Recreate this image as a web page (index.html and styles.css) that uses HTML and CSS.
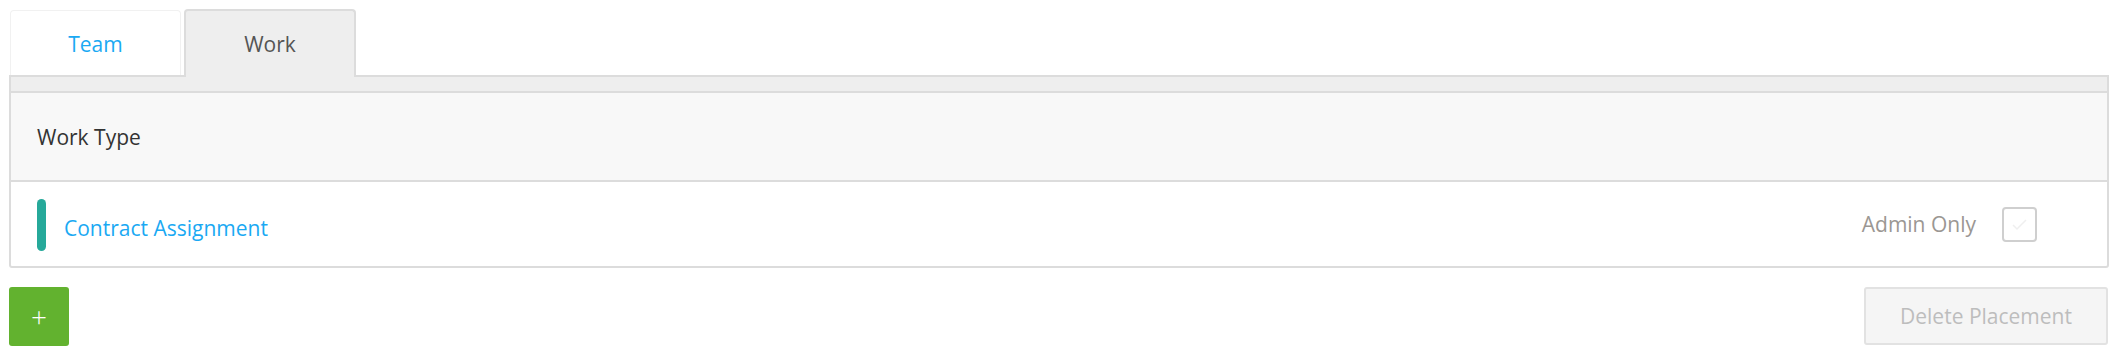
FILE: index.html
```
<!DOCTYPE html>
<html>
<head>
<meta charset="utf-8">
<link rel="stylesheet" href="styles.css">
</head>
<body>
<div class="page">
  <div class="tabs">
    <div class="tab tab-team">Team</div>
    <div class="tab tab-work">Work</div>
  </div>
  <div class="panel">
    <div class="strip"></div>
    <div class="head">Work Type</div>
    <div class="row">
      <div class="row-left">
        <span class="bar"></span>
        <span class="link">Contract Assignment</span>
      </div>
      <div class="row-right">
        <span class="admin">Admin Only</span>
        <span class="check">
          <svg width="17" height="13" viewBox="0 0 17 13"><path d="M2 7 L6 11 L15 2" fill="none" stroke="#efefef" stroke-width="1.5"/></svg>
        </span>
      </div>
    </div>
  </div>
  <div class="actions">
    <button class="add">+</button>
    <button class="delete">Delete Placement</button>
  </div>
</div>
</body>
</html>
```
FILE: styles.css
```
* { box-sizing: border-box; }
html, body { margin: 0; padding: 0; background: #fff; }
body { font-family: "Open Sans", "Noto Sans", sans-serif; }
.page { padding: 9px 10px 0 9px; }
.tabs { display: flex; align-items: flex-end; height: 66px; padding-left: 1px; gap: 3px; }
.tab { display: flex; align-items: center; justify-content: center; font-size: 21px; border-radius: 4px 4px 0 0; }
.tab-team { width: 171px; height: 65px; border: 1px solid #f1f1f1; border-bottom: none; color: #1aa9f3; background: #fff; padding-top: 1px; }
.tab-work { width: 172px; height: 68px; margin-bottom: -2px; border: 2px solid #dcdcdc; border-bottom: none; background: #eeeeee; color: #555; position: relative; z-index: 1; padding-bottom: 1px; }
.panel { border: 2px solid #dcdcdc; border-radius: 0 0 3px 3px; }
.strip { height: 16px; background: #eeeeee; border-bottom: 2px solid #dcdcdc; }
.head { height: 89px; background: #f8f8f8; border-bottom: 2px solid #dcdcdc; display: flex; align-items: center; padding-left: 26px; font-size: 21px; color: #333; }
.row { height: 84px; display: flex; align-items: center; justify-content: space-between; padding: 0 70px 0 26px; }
.row-left { display: flex; align-items: center; }
.bar { width: 9px; height: 52px; border-radius: 5px; background: #26a99a; margin-top: 2px; }
.link { margin-left: 18px; font-size: 21px; color: #1aa9f3; padding-top: 7px; }
.row-right { display: flex; align-items: center; }
.admin { font-size: 21px; color: #9b9793; }
.check { width: 35px; height: 35px; border: 2px solid #cfcfcf; border-radius: 4px; margin-left: 26px; display: flex; align-items: center; justify-content: center; }
.actions { display: flex; justify-content: space-between; align-items: flex-start; margin-top: 19px; }
.add { width: 60px; height: 59px; border: none; border-radius: 3px; background: #62b22f; color: #fff; font-family: "Open Sans", sans-serif; font-size: 28px; font-weight: 300; padding: 0 0 2px 0; }
.delete { width: 244px; height: 58px; margin-right: 1px; border: 2px solid #e2e2e2; border-radius: 3px; background: #f5f5f5; color: #bdbdbd; font-family: "Open Sans", sans-serif; font-size: 21px; padding: 0; }
```
